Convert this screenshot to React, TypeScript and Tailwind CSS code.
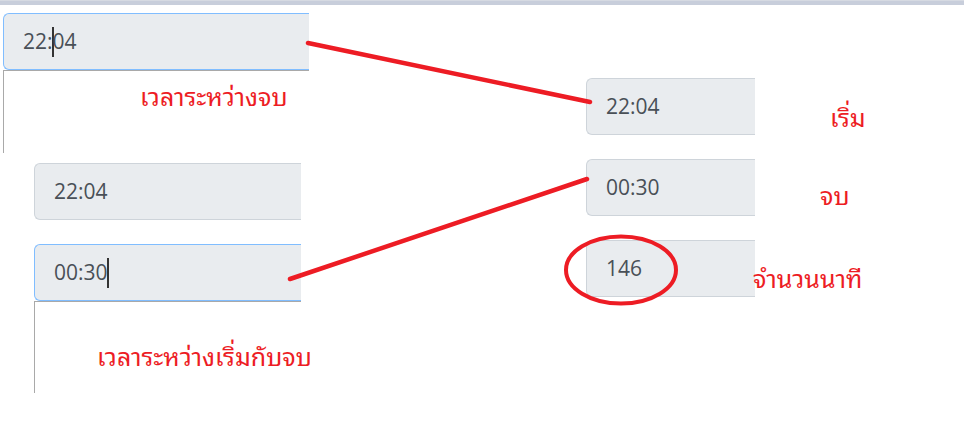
const thai =
  "font-['Tahoma','Noto_Sans_Thai_Looped','Loma','Garuda','Sarabun','Noto_Sans_Thai','Noto_Sans',sans-serif]";

function Field({
  text,
  focused = false,
  caretAt,
  className = "",
}: {
  text: string;
  focused?: boolean;
  caretAt?: number;
  className?: string;
}) {
  const before = caretAt === undefined ? text : text.slice(0, caretAt);
  const after = caretAt === undefined ? "" : text.slice(caretAt);
  return (
    <div
      className={`h-[57px] flex items-center pl-[19px] pt-[1px] bg-[#e9ecef] border border-r-0 rounded-l-[6px] text-[21px] text-[#495057] font-['Open_Sans',sans-serif] ${
        focused ? "border-[#80bdff]" : "border-[#ced4da]"
      } ${className}`}
    >
      <span>{before}</span>
      {caretAt !== undefined && <span className="inline-block w-[2px] h-[30px] bg-[#333] -mx-[1px]" />}
      <span>{after}</span>
    </div>
  );
}

function Note({ children, className = "" }: { children: string; className?: string }) {
  return (
    <div className={`${thai} text-[25px] leading-[30px] text-[#ed1c24] whitespace-nowrap ${className}`}>
      {children}
    </div>
  );
}

export default function App() {
  return (
    <div className="relative w-[964px] h-[443px] bg-white overflow-hidden">
      <div className="h-[5px] bg-[#c8cedb] border-t border-[#d6dae2]" />

      <div className="flex">
        <div className="w-[309px] shrink-0">
          <div className="ml-[3px] mt-[8px]">
            <Field text="22:04" focused caretAt={3} />
            <div className="h-[83px] border-l border-t border-[#a9a9a9] pl-[136px] pt-[9px]">
              <Note>เวลาระหว่างจบ</Note>
            </div>
          </div>

          <div className="ml-[34px] mt-[10px] w-[267px]">
            <Field text="22:04" />
            <Field text="00:30" focused caretAt={5} className="mt-[24px]" />
            <div className="h-[92px] border-l border-t border-[#a9a9a9] pl-[62px] pt-[38px]">
              <Note>เวลาระหว่างเริ่มกับจบ</Note>
            </div>
          </div>
        </div>

        <div className="ml-[277px] mt-[73px] flex flex-col gap-[24px]">
          <div className="flex items-start">
            <Field text="22:04" className="w-[169px]" />
            <Note className="ml-[75px] mt-[23px]">เริ่ม</Note>
          </div>
          <div className="flex items-start">
            <Field text="00:30" className="w-[169px]" />
            <Note className="ml-[65px] mt-[20px]">จบ</Note>
          </div>
          <div className="flex items-start">
            <Field text="146" className="w-[169px]" />
            <Note className="-ml-[2px] mt-[22px]">จำนวนนาที</Note>
          </div>
        </div>
      </div>

      <svg className="absolute inset-0 pointer-events-none" width="964" height="443" viewBox="0 0 964 443">
        <g stroke="#ed1c24" strokeWidth="4.5" strokeLinecap="round" fill="none">
          <line x1="308" y1="43" x2="590" y2="102" />
          <line x1="290" y1="279" x2="587" y2="179" />
          <ellipse cx="621" cy="270" rx="55" ry="33.5" strokeWidth="4" />
        </g>
      </svg>
    </div>
  );
}
